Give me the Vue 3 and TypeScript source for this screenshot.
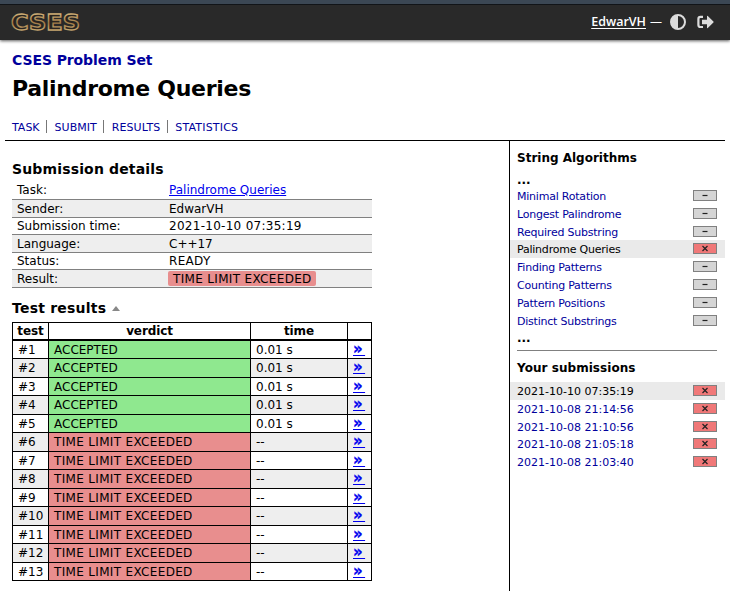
<script setup lang="ts">
interface Detail { label: string; value: string; kind?: 'link' | 'verdict' | 'stamp' | 'state' }
interface SideItem { label: string; failed: boolean; current: boolean }

const nav: string[] = ['TASK', 'SUBMIT', 'RESULTS', 'STATISTICS']

const details: Detail[] = [
  { label: 'Task:', value: 'Palindrome Queries', kind: 'link' },
  { label: 'Sender:', value: 'EdwarVH' },
  { label: 'Submission time:', value: '2021-10-10 07:35:19', kind: 'stamp' },
  { label: 'Language:', value: 'C++17' },
  { label: 'Status:', value: 'READY', kind: 'state' },
  { label: 'Result:', value: 'TIME LIMIT EXCEEDED', kind: 'verdict' },
]

const tests = Array.from({ length: 13 }, (_, i) => ({
  id: i + 1,
  ok: i < 5,
  verdict: i < 5 ? 'ACCEPTED' : 'TIME LIMIT EXCEEDED',
  time: i < 5 ? '0.01 s' : '--',
}))

const problems: SideItem[] = [
  'Minimal Rotation', 'Longest Palindrome', 'Required Substring', 'Palindrome Queries',
  'Finding Patterns', 'Counting Patterns', 'Pattern Positions', 'Distinct Substrings',
].map((label) => ({ label, failed: label === 'Palindrome Queries', current: label === 'Palindrome Queries' }))

const submissions: SideItem[] = [
  '2021-10-10 07:35:19', '2021-10-08 21:14:56', '2021-10-08 21:10:56',
  '2021-10-08 21:05:18', '2021-10-08 21:03:40',
].map((label, i) => ({ label, failed: true, current: i === 0 }))
</script>

<template>
  <div class="page">
    <header class="topbar">
      <svg class="logo" width="70" height="22" viewBox="0 0 70 22">
        <defs>
          <linearGradient id="gold" x1="0" y1="0" x2="0" y2="1">
            <stop offset="0" stop-color="#dcbf85" />
            <stop offset=".5" stop-color="#a07a46" />
            <stop offset="1" stop-color="#dfc58c" />
          </linearGradient>
        </defs>
        <text x="0" y="19" textLength="69" lengthAdjust="spacingAndGlyphs">CSES</text>
      </svg>
      <div class="account">
        <a class="user">EdwarVH</a>
        <span class="dash">—</span>
        <svg class="contrast" width="16" height="16" viewBox="0 0 16 16">
          <circle cx="8" cy="8" r="7" fill="none" stroke="#dcdcdc" stroke-width="2" />
          <path d="M8 1a7 7 0 0 0 0 14z" fill="#dcdcdc" />
        </svg>
        <svg class="logout" width="17" height="14" viewBox="0 0 17 14">
          <path d="M6 1.9H3.4Q1.4 1.9 1.4 3.9V10Q1.4 12 3.4 12H6" fill="none" stroke="#dcdcdc" stroke-width="2.2" />
          <path d="M5 4.8H10V1.4Q10 .5 10.8 1.1L16.4 6.4Q17 7 16.4 7.6L10.8 12.9Q10 13.5 10 12.6V9.2H5Z" fill="#dcdcdc" />
        </svg>
      </div>
    </header>

    <div class="title-block">
      <a class="parent">CSES Problem Set</a>
      <h1>Palindrome Queries</h1>
      <nav>
        <a v-for="n in nav" :key="n">{{ n }}</a>
      </nav>
    </div>

    <div class="columns">
      <main>
        <h2 class="sub">Submission details</h2>
        <div class="details">
          <div v-for="d in details" :key="d.label" class="detail">
            <span class="key">{{ d.label }}</span>
            <span class="value" :class="d.kind">{{ d.value }}</span>
          </div>
        </div>
        <h2 class="results">Test results <i class="caret"></i></h2>
        <div class="tests">
          <div class="test head"><b>test</b><b>verdict</b><b>time</b><b></b></div>
          <div v-for="t in tests" :key="t.id" class="test">
            <span>#{{ t.id }}</span>
            <span :class="t.ok ? 'ok' : 'bad'">{{ t.verdict }}</span>
            <span>{{ t.time }}</span>
            <span class="more"><a>»</a></span>
          </div>
        </div>
      </main>

      <aside>
        <h4>String Algorithms</h4>
        <div class="dots">...</div>
        <div class="list problems">
          <div v-for="p in problems" :key="p.label" class="item" :class="{ current: p.current }">
            <a>{{ p.label }}</a>
            <span class="badge" :class="{ failed: p.failed }">
              <svg width="8" height="7" viewBox="0 0 8 7">
                <path :d="p.failed ? 'M1.5 1L6.5 6M6.5 1L1.5 6' : 'M1.5 3.5H6.5'" />
              </svg>
            </span>
          </div>
        </div>
        <div class="dots last">...</div>
        <hr />
        <h4 class="yours">Your submissions</h4>
        <div class="list subs">
          <div v-for="s in submissions" :key="s.label" class="item" :class="{ current: s.current }">
            <a>{{ s.label }}</a>
            <span class="badge failed">
              <svg width="8" height="7" viewBox="0 0 8 7"><path d="M1.5 1L6.5 6M6.5 1L1.5 6" /></svg>
            </span>
          </div>
        </div>
      </aside>
    </div>
  </div>
</template>

<style>
body { background: #fff; }
</style>

<style scoped>
* { box-sizing: border-box; }
.page { width: 730px; height: 591px; overflow: hidden; font: 12px/14px "DejaVu Sans", sans-serif; color: #000; white-space: nowrap; }
.topbar { height: 40px; border-top: 4px solid #3b4754; background: #292929; box-shadow: inset 0 1px #111418, 0 1px 3px rgba(0, 0, 0, .65); display: flex; justify-content: space-between; padding: 7px 16px 0 11px; }
.logo { display: block; overflow: visible; }
.logo text { font: bold 21px "DejaVu Sans", sans-serif; fill: #292420; stroke: url(#gold); stroke-width: 1.3; }
.account { display: flex; height: 22px; align-items: center; color: #fff; font: 600 12.5px/16px "Open Sans", sans-serif; }
.user { text-decoration: underline; text-underline-offset: 2px; }
.dash { margin-left: 4px; width: 20px; font-size: 12px; font-weight: 400; }
.contrast { display: block; }
.logout { display: block; margin-left: 11px; }
.title-block { height: 101px; margin: 0 5px; padding: 12px 7px 0; border-bottom: 1px solid #000; }
.parent { display: block; color: #00009c; font-weight: bold; font-size: 14px; line-height: 16px; letter-spacing: -.1px; }
h1 { margin: 9px 0 0; font-size: 22px; line-height: 24px; letter-spacing: -.28px; }
nav { display: flex; margin-top: 19px; height: 13px; font-size: 11px; line-height: 15px; }
nav a { color: #00009c; padding-right: 6.5px; }
nav a + a { border-left: 1px solid #777; padding-left: 7.5px; }
nav a:nth-child(3) { letter-spacing: .1px; }
nav a:nth-child(4) { letter-spacing: .18px; }
.columns { display: flex; height: 450px; }
main { width: 509px; padding: 19px 0 0 12px; }
h2 { margin: 0; font-size: 14px; line-height: 18px; letter-spacing: .15px; }
.details { width: 360px; margin-top: 4px; }
.detail { display: flex; height: 18px; border-bottom: 1px solid #808080; padding-left: 5px; line-height: 17px; }
.detail:nth-child(odd):not(:first-child) { height: 17px; line-height: 16px; }
.detail:nth-child(even) { background: #eee; line-height: 18px; }
.key { width: 152px; }
.link { color: #0000ee; text-decoration: underline; }
.stamp { letter-spacing: .28px; }
.state { letter-spacing: .3px; }
.verdict { height: 15px; margin: 1px 0 0 -1px; line-height: 16px; padding: 0 4px 0 5px; background: #e88e8e; border-radius: 2px; letter-spacing: .33px; }
.results { margin-top: 11px; display: flex; align-items: center; letter-spacing: .22px; }
.caret { margin-left: 6px; border: 4px solid transparent; border-top: 0; border-bottom: 5px solid #888; }
.tests { width: 360px; margin-top: 5px; border: 1px solid #000; border-bottom: 0; }
.test { display: grid; grid-template-columns: 35px 202px 97px 24px; grid-template-rows: 100%; height: 18px; border-bottom: 1px solid #000; line-height: 18px; }
.test:nth-child(odd) { height: 19px; background: #eee; line-height: 19px; }
.test.head { height: 18px; border-bottom-width: 2px; background: #fff; text-align: center; line-height: 17px; letter-spacing: -.1px; }
.test > * + * { border-left: 1px solid #000; }
.test > span { padding-left: 5px; }
.ok { background: #8fe88f; }
.bad { background: #e88e8e; letter-spacing: .33px; }
.more { line-height: 17px; }
.more a { color: #0000ee; font-weight: bold; font-size: 15px; letter-spacing: 2.4px; text-decoration: underline; text-decoration-thickness: 1px; text-underline-offset: 1px; -webkit-text-stroke: .3px #0000ee; }
aside { width: 216px; border-left: 1px solid #000; padding-top: 8px; font-size: 11px; }
h4 { margin: 0 7px; font-size: 12px; line-height: 19px; }
.dots { padding-left: 7px; margin-top: 5px; height: 14px; line-height: 15px; font-size: 12px; font-weight: bold; letter-spacing: -.1px; }
.item { height: 18px; display: flex; justify-content: space-between; padding: 0 8px 0 7px; line-height: 19px; }
.item a { color: #00009c; }
.problems .item a { letter-spacing: -.22px; }
.item.current a { color: #000; }
.current { background: #eaeaea; }
.badge { width: 24px; height: 11px; margin-top: 3px; border: 1px solid #808080; background: #d5d5d5; display: flex; align-items: center; justify-content: center; }
.badge svg { display: block; fill: none; stroke: #222; stroke-width: 1.2; }
.badge.failed { background: #f07878; }
.problems .item:nth-child(3), .subs .item:nth-child(3) { height: 17px; }
.dots.last { margin-top: 0; line-height: 17px; }
hr { margin: 6px 8px 0 7px; border: 0; border-top: 1px solid #808080; }
.yours { margin-top: 8px; letter-spacing: .05px; }
.subs { margin-top: 4px; }
</style>
